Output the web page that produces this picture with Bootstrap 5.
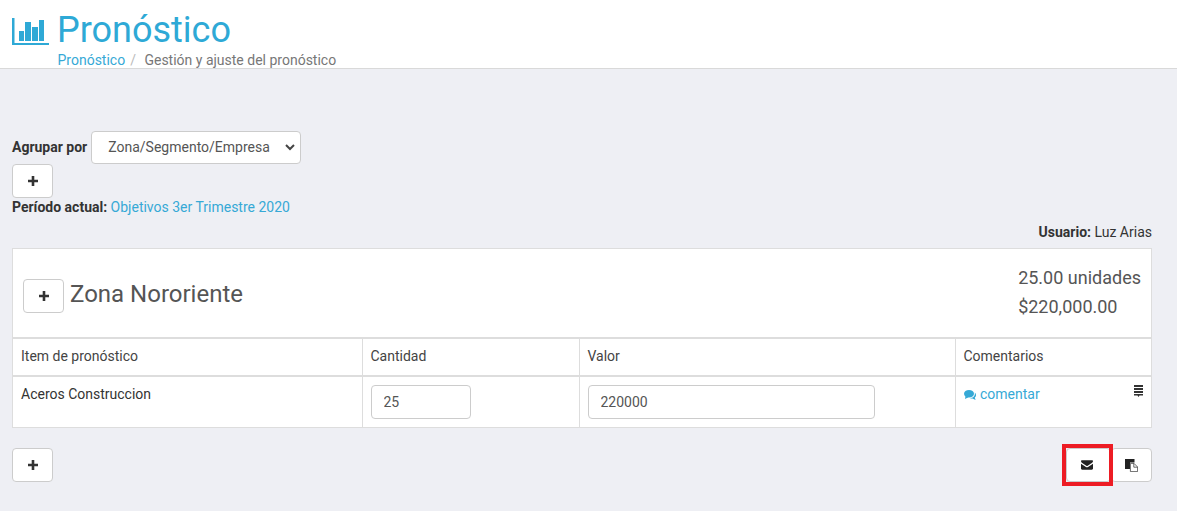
<!DOCTYPE html>
<html lang="es">
<head>
    <meta charset="UTF-8">
    <meta name="viewport" content="width=device-width, initial-scale=1.0">
    <title>Pronóstico</title>
    <link href="https://cdn.jsdelivr.net/npm/bootstrap@5.3.0/dist/css/bootstrap.min.css" rel="stylesheet">
    <style>
        html, body { height: 100%; }
        body { background: #eeeff4; font-family: Roboto, "Liberation Sans", sans-serif; font-size: 14px; color: #333; overflow: hidden; }
        a { color: #36a9d6; text-decoration: none; }

        .page-head { background: #fff; height: 69px; border-bottom: 1px solid #d9d9d9; padding: 8px 12px 0; }
        .head-title { color: #2ea9d6; font-size: 36px; font-weight: 400; line-height: 44px; margin: 0; }
        .head-icon { width: 37px; height: 27px; margin: 2px 8px 0 0; }
        .head-crumbs { margin: 0 0 0 45.5px; line-height: 16px; color: #777; font-size: 14px; }
        .head-crumbs .sep { color: #bbb; margin: 0 5px 0 5px; }

        .page-body { padding: 62px 25px 0 12px; }
        .group-label { font-weight: 700; margin-right: 4px; }
        .group-select { width: 210px; height: 33px; font-size: 14px; color: #555; padding: 0 16px; border-color: #ccc; border-radius: 4px; background-image: url("data:image/svg+xml,%3csvg xmlns='http://www.w3.org/2000/svg' viewBox='0 0 10 7'%3e%3cpath fill='none' stroke='%23444' stroke-width='2' d='M1 1l4 4 4-4'/%3e%3c/svg%3e"); background-size: 10px 7px; background-position: right 5px center; }
        .btn-tool { background: #fff; border: 1px solid #ccc; border-radius: 4px; height: 34px; width: 41px; padding: 0; color: #333; display: inline-flex; align-items: center; justify-content: center; }
        .plus-mark { width: 10px; height: 10px; }
        .info-line { line-height: 18px; }
        .user-line { line-height: 18px; margin-top: 7px; margin-bottom: 7px; }

        .zone-box { background: #fff; border: 1px solid #ddd; height: 180px; }
        .zone-head { height: 90px; padding: 0 10px; border-bottom: 2px solid #ddd; }
        .zone-head .btn-tool { margin-top: 6px; }
        .zone-name { font-size: 24px; font-weight: 400; color: #555; margin: 2px 0 0 6px; line-height: 30px; }
        .zone-totals { margin-bottom: 3px; }
        .zone-total { font-size: 18px; color: #555; line-height: 29px; margin: 0; }

        .zone-table { margin: 0; table-layout: fixed; color: #333; }
        .zone-table tr { border-width: 0; }
        .zone-table th, .zone-table td { border-color: #ddd; padding: 7px 8px 8px; font-size: 14px; font-weight: 400; line-height: 20px; box-shadow: none; }
        .zone-table thead th { border-top: 0; border-bottom-width: 2px; height: 37px; padding-bottom: 9px; color: #444; }
        .zone-table td { height: 50px; position: relative; }
        .qty-input { width: 100px; height: 34px; margin-top: 1px; }
        .val-input { width: 287px; height: 34px; margin-top: 1px; }
        .qty-input, .val-input { font-size: 14px; color: #555; border-color: #ccc; border-radius: 4px; padding: 6px 12px; }
        .talk-icon { width: 12px; height: 10px; margin-right: 1px; }
        .note-icon { position: absolute; top: 8px; right: 8px; width: 9px; height: 12px; }

        .foot-bar { margin-top: 20px; }
        .btn-marked { width: 45px; position: relative; }
        .btn-marked::after { content: ""; position: absolute; top: -5px; left: -5px; right: -3px; bottom: -5px; border: 4px solid #ed1c24; z-index: 1; }
        .mail-icon { width: 12px; height: 10px; margin-right: 3px; }
        .copy-icon { width: 13px; height: 13px; margin-right: 1px; }
    </style>
</head>
<body>

<!-- Header -->
<div class="page-head">
    <h1 class="head-title d-flex align-items-center">
        <svg class="head-icon" viewBox="0 0 37 27" fill="#2ea9d6">
            <rect x="0" y="0" width="2.5" height="27"/>
            <rect x="0" y="25" width="37" height="2"/>
            <rect x="7" y="13" width="5" height="10"/>
            <rect x="13" y="4" width="6" height="19"/>
            <rect x="20" y="9" width="6" height="14"/>
            <rect x="27" y="2" width="5" height="21"/>
        </svg>
        Pronóstico
    </h1>
    <p class="head-crumbs"><a href="#">Pronóstico</a><span class="sep">/</span> Gestión y ajuste del pronóstico</p>
</div>

<div class="page-body">
    <!-- Filters -->
    <div class="d-flex align-items-center">
        <label class="group-label" for="groupBy">Agrupar por</label>
        <select class="form-select group-select" id="groupBy">
            <option>Zona/Segmento/Empresa</option>
        </select>
    </div>
    <button type="button" class="btn-tool">
        <svg class="plus-mark" viewBox="0 0 10 10" fill="#333"><path d="M3.7 0 H6.3 V3.7 H10 V6.3 H6.3 V10 H3.7 V6.3 H0 V3.7 H3.7 Z"/></svg>
    </button>
    <div class="info-line"><b>Período actual:</b> <a href="#">Objetivos 3er Trimestre 2020</a></div>
    <div class="user-line text-end"><b>Usuario:</b> Luz Arias</div>

    <!-- Zone -->
    <div class="zone-box">
        <div class="zone-head d-flex align-items-center justify-content-between">
            <div class="d-flex align-items-center">
                <button type="button" class="btn-tool">
                    <svg class="plus-mark" viewBox="0 0 10 10" fill="#333"><path d="M3.7 0 H6.3 V3.7 H10 V6.3 H6.3 V10 H3.7 V6.3 H0 V3.7 H3.7 Z"/></svg>
                </button>
                <h3 class="zone-name">Zona Nororiente</h3>
            </div>
            <div class="zone-totals">
                <p class="zone-total">25.00 unidades</p>
                <p class="zone-total">$220,000.00</p>
            </div>
        </div>
        <table class="table table-bordered zone-table">
            <colgroup>
                <col style="width: 349px">
                <col style="width: 217px">
                <col style="width: 376px">
                <col>
            </colgroup>
            <thead>
            <tr>
                <th class="border-start-0">Item de pronóstico</th>
                <th>Cantidad</th>
                <th>Valor</th>
                <th class="border-end-0">Comentarios</th>
            </tr>
            </thead>
            <tbody>
            <tr>
                <td class="border-start-0 border-bottom-0">Aceros Construccion</td>
                <td class="border-bottom-0"><input type="text" class="form-control qty-input" value="25"></td>
                <td class="border-bottom-0"><input type="text" class="form-control val-input" value="220000"></td>
                <td class="border-end-0 border-bottom-0">
                    <a href="#">
                        <svg class="talk-icon" viewBox="0 0 12 10" fill="#36a9d6">
                            <ellipse cx="5" cy="3.8" rx="5" ry="3.8"/>
                            <path d="M1.5 6 L1 9 L4.5 7.3 Z"/>
                            <path d="M10.8 2.6 C12.6 4.4 12.3 6.6 10.8 7.6 L11.6 10 L8.4 8.6 C7.4 8.6 6.6 8.4 6 8.2 C8.8 8.2 11.4 6 10.8 2.6 Z"/>
                        </svg>
                        comentar
                    </a>
                    <svg class="note-icon" viewBox="0 0 9 12" fill="#333">
                        <rect x="0" y="0" width="9" height="2"/>
                        <rect x="0" y="3" width="9" height="2"/>
                        <rect x="0" y="6" width="9" height="2"/>
                        <path d="M0 9 H9 V10.5 H5.5 L4.5 12 L3.5 10.5 H0 Z"/>
                    </svg>
                </td>
            </tr>
            </tbody>
        </table>
    </div>

    <!-- Footer actions -->
    <div class="foot-bar d-flex justify-content-between">
        <button type="button" class="btn-tool">
            <svg class="plus-mark" viewBox="0 0 10 10" fill="#333"><path d="M3.7 0 H6.3 V3.7 H10 V6.3 H6.3 V10 H3.7 V6.3 H0 V3.7 H3.7 Z"/></svg>
        </button>
        <div class="d-flex">
            <button type="button" class="btn-tool btn-marked">
                <svg class="mail-icon" viewBox="0 0 14 11" fill="#222">
                    <path d="M1.2 0 H12.8 C13.5 0 14 .5 14 1.2 C14 1.9 13.6 2.5 13 2.9 L7.8 6.3 C7.3 6.6 6.7 6.6 6.2 6.3 L1 2.9 C.4 2.5 0 1.9 0 1.2 C0 .5 .5 0 1.2 0 Z"/>
                    <path d="M0 4 L5.8 7.8 C6.5 8.2 7.5 8.2 8.2 7.8 L14 4 V9.6 C14 10.4 13.4 11 12.6 11 H1.4 C.6 11 0 10.4 0 9.6 Z"/>
                </svg>
            </button>
            <button type="button" class="btn-tool">
                <svg class="copy-icon" viewBox="0 0 13 13">
                    <path fill="#222" d="M0 0 H9.5 V3.5 H5 V10 H0 Z"/>
                    <path fill="#fff" stroke="#444" stroke-width=".8" d="M5.4 4.4 H9 L12.6 8 V12.6 H5.4 Z"/>
                    <path fill="none" stroke="#444" stroke-width=".8" d="M8.8 4.4 V8.2 H12.6"/>
                </svg>
            </button>
        </div>
    </div>
</div>

</body>
</html>
